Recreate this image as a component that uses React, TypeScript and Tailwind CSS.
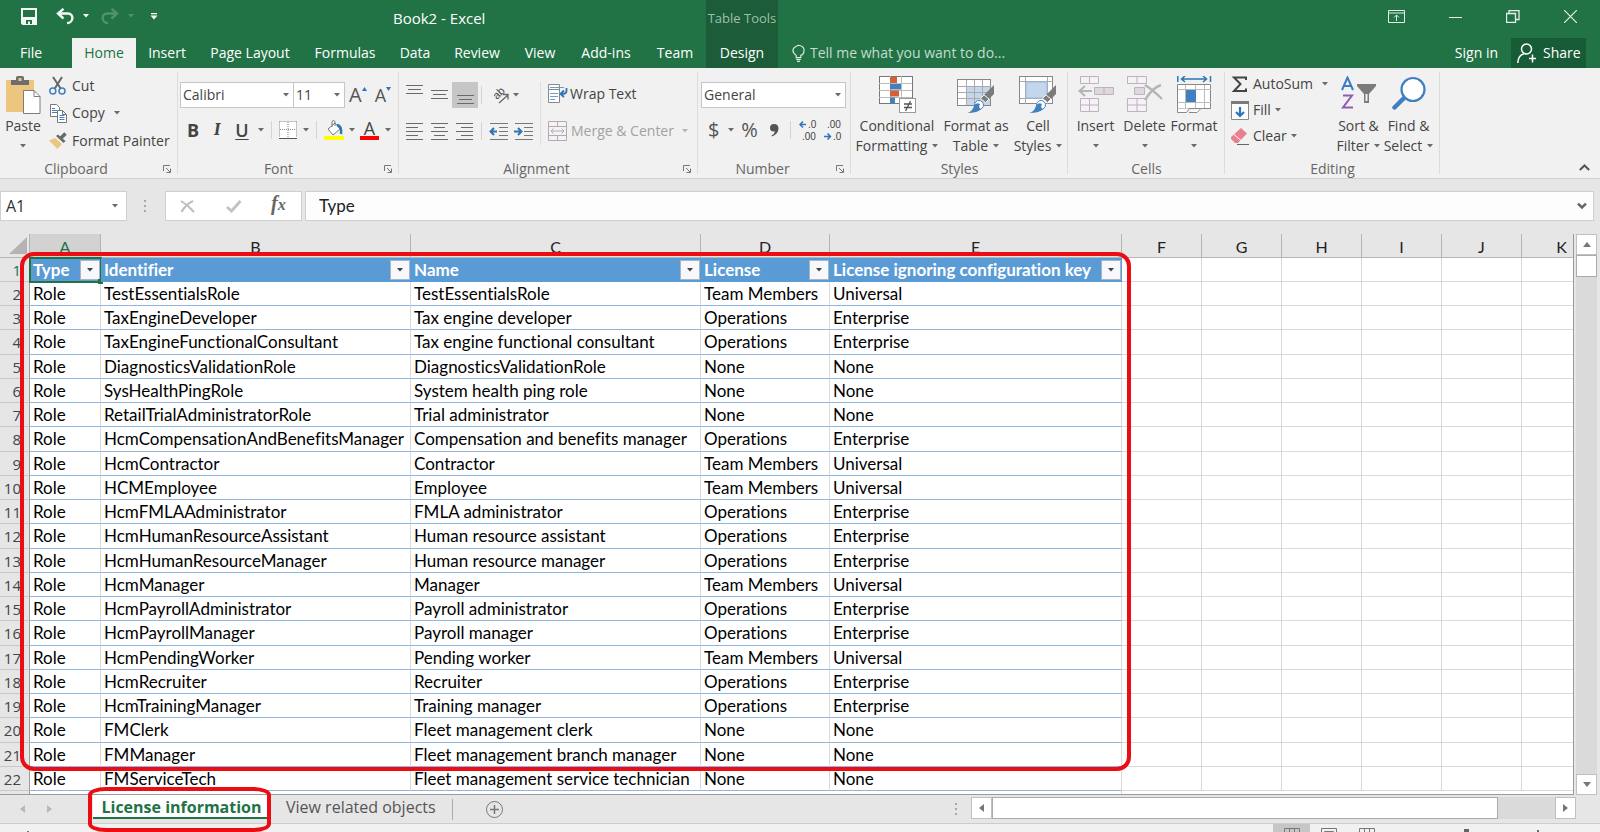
import React, { useState } from 'react';

interface RoleRow {
  id: string;
  name: string;
  license: string;
  ignoring: string;
}

const rows: RoleRow[] = [
  { id: 'TestEssentialsRole', name: 'TestEssentialsRole', license: 'Team Members', ignoring: 'Universal' },
  { id: 'TaxEngineDeveloper', name: 'Tax engine developer', license: 'Operations', ignoring: 'Enterprise' },
  { id: 'TaxEngineFunctionalConsultant', name: 'Tax engine functional consultant', license: 'Operations', ignoring: 'Enterprise' },
  { id: 'DiagnosticsValidationRole', name: 'DiagnosticsValidationRole', license: 'None', ignoring: 'None' },
  { id: 'SysHealthPingRole', name: 'System health ping role', license: 'None', ignoring: 'None' },
  { id: 'RetailTrialAdministratorRole', name: 'Trial administrator', license: 'None', ignoring: 'None' },
  { id: 'HcmCompensationAndBenefitsManager', name: 'Compensation and benefits manager', license: 'Operations', ignoring: 'Enterprise' },
  { id: 'HcmContractor', name: 'Contractor', license: 'Team Members', ignoring: 'Universal' },
  { id: 'HCMEmployee', name: 'Employee', license: 'Team Members', ignoring: 'Universal' },
  { id: 'HcmFMLAAdministrator', name: 'FMLA administrator', license: 'Operations', ignoring: 'Enterprise' },
  { id: 'HcmHumanResourceAssistant', name: 'Human resource assistant', license: 'Operations', ignoring: 'Enterprise' },
  { id: 'HcmHumanResourceManager', name: 'Human resource manager', license: 'Operations', ignoring: 'Enterprise' },
  { id: 'HcmManager', name: 'Manager', license: 'Team Members', ignoring: 'Universal' },
  { id: 'HcmPayrollAdministrator', name: 'Payroll administrator', license: 'Operations', ignoring: 'Enterprise' },
  { id: 'HcmPayrollManager', name: 'Payroll manager', license: 'Operations', ignoring: 'Enterprise' },
  { id: 'HcmPendingWorker', name: 'Pending worker', license: 'Team Members', ignoring: 'Universal' },
  { id: 'HcmRecruiter', name: 'Recruiter', license: 'Operations', ignoring: 'Enterprise' },
  { id: 'HcmTrainingManager', name: 'Training manager', license: 'Operations', ignoring: 'Enterprise' },
  { id: 'FMClerk', name: 'Fleet management clerk', license: 'None', ignoring: 'None' },
  { id: 'FMManager', name: 'Fleet management branch manager', license: 'None', ignoring: 'None' },
  { id: 'FMServiceTech', name: 'Fleet management service technician', license: 'None', ignoring: 'None' }
];

const headers = ['Type', 'Identifier', 'Name', 'License', 'License ignoring configuration key'];
const letters = ['A', 'B', 'C', 'D', 'E', 'F', 'G', 'H', 'I', 'J', 'K'];
const emptyCols = ['F', 'G', 'H', 'I', 'J', 'K'];

const Arrow = ({ className = 'text-[#6a6a6a]' }: { className?: string }) => (
  <svg width="6" height="4" viewBox="0 0 6 4" className={`shrink-0 ${className}`} aria-hidden="true">
    <path d="M0 0h6L3 3.6z" fill="currentColor" />
  </svg>
);

const Launcher = ({ label }: { label: string }) => (
  <button aria-label={label} className="absolute right-[6px] bottom-[5px]">
    <svg width="9" height="8" viewBox="0 0 9 8" fill="none" stroke="#777">
      <path d="M.5 6V.5H7M3 3l4 4M7.500 3.500v4h-4" />
    </svg>
  </button>
);

interface GroupProps {
  label: string;
  className: string;
  launcher?: boolean;
  children: React.ReactNode;
}

const Group: React.FC<GroupProps> = ({ label, className, launcher, children }) => (
  <section aria-label={label} className={`relative flex shrink-0 flex-col ${className}`}>
    <div className="h-[92px]">{children}</div>
    <div className="text-center leading-[18px] text-[#666]">{label}</div>
    {launcher && <Launcher label={`${label} settings`} />}
    <div className="absolute top-1 right-0 bottom-1 w-px bg-[#dcdcdc]" />
  </section>
);

interface BigButtonProps {
  icon: React.ReactNode;
  top: string;
  bottom?: string;
  className: string;
}

const BigButton: React.FC<BigButtonProps> = ({ icon, top, bottom, className }) => (
  <button className={`flex shrink-0 flex-col items-center pt-2 leading-5 whitespace-nowrap ${className}`}>
    {icon}
    <span className="pt-[2px]">{top}</span>
    <span className="flex h-5 items-center gap-[5px]">
      {bottom}
      <Arrow />
    </span>
  </button>
);

const Separator = ({ className = 'h-[18px]' }: { className?: string }) => (
  <span className={`w-px shrink-0 bg-[#d4d4d4] ${className}`} />
);

const Lines = ({ widths, top = 1, gap = 4, align }: { widths: number[]; top?: number; gap?: number; align: 'left' | 'center' | 'right' }) => (
  <svg width="17" height="19" viewBox="0 0 17 19" aria-hidden="true">
    {widths.map((w, i) => (
      <rect
        key={i}
        x={align === 'left' ? 0 : align === 'right' ? 17 - w : Math.floor((17 - w) / 2)}
        y={top + i * gap}
        width={w}
        height="1"
        fill="#6a6a6a"
      />
    ))}
  </svg>
);

const Indent = ({ outward }: { outward: boolean }) => (
  <svg width="19" height="19" viewBox="0 0 19 19" fill="none" aria-hidden="true">
    <path d="M1 1.500h18M10 5.500h9M10 9.500h9M10 13.500h9M1 17.500h18" stroke="#777" />
    {outward ? (
      <path d="M8 9.500H2M5 6L1.500 9.500 5 13" stroke="#2e75b6" strokeWidth="2" />
    ) : (
      <path d="M0 9.500h6M4 6l3.500 3.500L4 13" stroke="#2e75b6" strokeWidth="2" />
    )}
  </svg>
);

const PasteIcon = () => (
  <svg width="35" height="39" viewBox="0 0 35 39" aria-hidden="true">
    <rect x="0" y="4" width="28" height="32" rx="1" fill="#ecc57e" />
    <path d="M5 4h5V1.500Q10 0 12 0h4q2 0 2 1.500V4h5v5H5z" fill="#6d6d6d" />
    <rect x="12.500" y="2" width="3" height="3" fill="#ecc57e" />
    <path d="M17.500 14.500H28l6 6v17H17.500z" fill="#fff" stroke="#7d7d7d" />
    <path d="M28 14.500v6h6" fill="none" stroke="#7d7d7d" />
  </svg>
);

const CutIcon = () => (
  <svg width="18" height="19" viewBox="0 0 18 19" fill="none" aria-hidden="true">
    <path d="M4 1l8 12M13 1L5.500 13" stroke="#666" strokeWidth="2" />
    <circle cx="3.800" cy="15" r="3" stroke="#3f7fc1" strokeWidth="1.500" />
    <circle cx="13" cy="15" r="3" stroke="#3f7fc1" strokeWidth="1.500" />
  </svg>
);

const CopyIcon = () => (
  <svg width="18" height="19" viewBox="0 0 18 19" fill="#fff" stroke="#777" aria-hidden="true">
    <path d="M1.500.5h6l3 3v9h-9z" />
    <path d="M3 4.500h3M3 6.500h5M3 8.500h5" stroke="#3f7fc1" />
    <path d="M8.500 6.500h5l4 4v8h-9zM13.500 6.500v4h4" />
    <path d="M10.500 11.500h5M10.500 13.500h5M10.500 15.500h5" stroke="#3f7fc1" />
  </svg>
);

const PainterIcon = () => (
  <svg width="19" height="17" viewBox="0 0 19 17" aria-hidden="true">
    <path d="M0 8.500L6 6l7 6-4.500 5z" fill="#ecc57e" />
    <path d="M7 4l2-1.500 7.500 6.500-2 2z" fill="#6a6a6a" />
    <path d="M11.500 6.500L16.500 1.500" stroke="#6a6a6a" strokeWidth="3.500" />
  </svg>
);

const BorderIcon = () => (
  <svg width="18" height="18" viewBox="0 0 18 18" fill="none" aria-hidden="true">
    <rect x="0" y="0" width="18" height="17" fill="#fff" />
    <path d="M.5.5h17M.5.5v16M17.500.5v16M9 1v16M1 8.500h16" stroke="#888" strokeDasharray="1 1" />
    <path d="M0 17.500h18" stroke="#555" />
  </svg>
);

const BucketIcon = () => (
  <svg width="20" height="20" viewBox="0 0 20 20" fill="none" aria-hidden="true">
    <path d="M4 9l7-6 5 6-7 6z" fill="#fff" stroke="#777" />
    <path d="M8 7V2.500Q8 .5 9.500.5T11 2.500V6" stroke="#777" />
    <path d="M13 5q5 1 4 9" stroke="#2e75b6" strokeWidth="2.500" />
    <rect y="16" width="20" height="4" fill="#ff0" />
  </svg>
);

const OrientationIcon = () => (
  <svg width="20" height="22" viewBox="0 0 20 22" className="font-['Liberation_Sans',sans-serif]" aria-hidden="true">
    <text x="7" y="16" transform="rotate(-45 7 16)" fontSize="11" fill="#444">ab</text>
    <path d="M9 19l9-8M13 10.500h5V15.500" fill="none" stroke="#666" strokeWidth="1.300" />
  </svg>
);

const WrapIcon = () => (
  <svg width="20" height="20" viewBox="0 0 20 20" fill="none" aria-hidden="true">
    <path d="M.5.5h11v5H.5zM.5 5.500h11v13H.5z" fill="#fff" stroke="#888" />
    <path d="M2 3.500h14M2 9.500h8M2 12.500h8M2 15.500h5" stroke="#6e9bd1" />
    <path d="M18.500 4v3q0 3-5 3M16 6.500L12.500 10l3.500 3" stroke="#2e75b6" strokeWidth="1.800" />
  </svg>
);

const MergeIcon = () => (
  <svg width="19" height="20" viewBox="0 0 19 20" fill="#f5f1f5" stroke="#b0abb0" aria-hidden="true">
    <path d="M.5.5h18v19H.5zM.5 5.500h18M.5 14.500h18M9.500.5v5M9.500 14.500v5M3 10h13M5.500 7.500L3 10l2.500 2.500M13.500 7.500L16 10l-2.500 2.500" />
  </svg>
);

const Brush = () => (
  <>
    <path d="M37 9v9l-5 5-5-4z" fill="#7b7b7b" />
    <path d="M27 19l5 4-3.500 3.500-5-4z" fill="#7b7b7b" stroke="#f1f1f1" />
    <circle cx="22" cy="29" r="4.500" fill="#fff" stroke="#4a86c5" />
    <path d="M10 37q5-1 7-7 2-4 6-2-2 4 1 5-3 4-14 4z" fill="#4080bf" />
  </>
);

const ConditionalIcon = () => (
  <svg width="37" height="38" viewBox="0 0 37 38" aria-hidden="true">
    <rect x=".5" y=".5" width="33" height="27" fill="#fff" stroke="#777" />
    <path d="M11.500 0v27M22.500 0v27M0 7.500h33M0 14.500h33M0 21.500h33" stroke="#bbb" />
    <path d="M11 1h7v6h-7zM11 14.500h9v6h-9z" fill="#d55e3b" />
    <path d="M11 8h11v5.500H11zM11 21.500h5v5.500h-5z" fill="#4080bf" />
    <rect x="20.500" y="22.500" width="16" height="14" fill="#fff" stroke="#999" />
    <path d="M25 28h8M25 31.500h8M31.500 25l-5 10" stroke="#555" strokeWidth="1.300" />
  </svg>
);

const TableIcon = () => (
  <svg width="38" height="38" viewBox="0 0 38 38" aria-hidden="true">
    <rect x=".5" y="3.500" width="33" height="26" fill="#fff" stroke="#888" />
    <path d="M9 10h24v19H9z" fill="#c3d6ec" />
    <path d="M9.500 4v25M17.500 4v25M25.500 4v25M1 10.500h33M1 16.500h33M1 22.500h33" stroke="#aaa" />
    <Brush />
  </svg>
);

const CellStylesIcon = () => (
  <svg width="38" height="38" viewBox="0 0 38 38" aria-hidden="true">
    <rect x=".5" y=".5" width="33" height="27" fill="#fff" stroke="#888" />
    <path d="M6.500 1v27M28.500 1v27M1 5.500h33M1 22.500h33" stroke="#aaa" />
    <path d="M7 6h21v16H7z" fill="#c3d6ec" stroke="#9fb8d6" />
    <Brush />
  </svg>
);

const InsertIcon = () => (
  <svg width="36" height="38" viewBox="0 0 36 38" fill="#f7f0f7" stroke="#bbb4bb" aria-hidden="true">
    <path d="M2.500.5h18v7h-18zM11.500.5v7M2.500 22.500h18v13h-18zM11.500 22.500v13M2.500 29h18" />
    <path d="M16.500 11.500h19v7h-19zM26 11.500v7" fill="#ded8de" />
    <path d="M14 15H2M7 10l-5.500 5L7 20" fill="none" stroke="#b5b5b5" strokeWidth="2.200" />
  </svg>
);

const DeleteIcon = () => (
  <svg width="36" height="38" viewBox="0 0 36 38" fill="#f7f0f7" stroke="#bbb4bb" aria-hidden="true">
    <path d="M.5.5h19v7H.5zM10 .5v7M.5 22.500h19v13H.5zM10 22.500v13M.5 29h19" />
    <path d="M7.500 11.500h10v7h-10z" fill="#ded8de" />
    <path d="M18 9q8 5 17 14M34 9q-9 3-16 15" fill="none" stroke="#b5b5b5" strokeWidth="2.400" />
  </svg>
);

const FormatIcon = () => (
  <svg width="35" height="38" viewBox="0 0 35 38" aria-hidden="true">
    <path d="M.8 0v6M33.500 0v6M4 3h26M8 0L4.500 3 8 6M26 0l3.500 3L26 6" fill="none" stroke="#2e75b6" strokeWidth="1.500" />
    <path d="M.5 8.500h33v24h-33z" fill="#fff" stroke="#888" />
    <path d="M8.500 9v23M18.500 9v23M27.500 9v23M1 13.500h33M1 26.500h33" stroke="#bbb" />
    <path d="M9 14h10v12H9z" fill="#4080bf" />
    <path d="M.5 32.500v4h9l3-4M12 36.500h8l4-4" fill="#fff" stroke="#888" />
  </svg>
);

const SortIcon = () => (
  <svg width="36" height="38" viewBox="0 0 36 38" fill="none" aria-hidden="true">
    <path d="M1 14L6.500 1.500 12 14M3 10h7" stroke="#3b7cc0" strokeWidth="2" />
    <path d="M2 19.500h9L2 31.500h10" stroke="#8f5cb5" strokeWidth="2" />
    <path d="M16 8h19v2l-7 8v9h-5v-9l-7-8z" fill="#7b7b7b" />
    <path d="M25.500 18v7" stroke="#f1f1f1" strokeWidth="2" />
  </svg>
);

const FindIcon = () => (
  <svg width="34" height="38" viewBox="0 0 34 38" fill="none" aria-hidden="true">
    <path d="M12 22L2.500 31.500" stroke="#3f7fc1" strokeWidth="4.500" strokeLinecap="round" />
    <circle cx="21" cy="13.500" r="11.500" fill="#fff" stroke="#3f7fc1" strokeWidth="2.200" />
  </svg>
);

const TitleBar = () => (
  <header className="flex h-[38px] items-stretch bg-[#217346] whitespace-nowrap text-white">
    <div className="flex w-[38%] max-w-[393px] items-center pl-5">
      <button aria-label="Save" className="mb-[6px] ml-px">
        <svg width="16" height="17" viewBox="0 0 16 17" aria-hidden="true">
          <path d="M0 0h16v17H1.500L0 15.500zM2 2v7h12V2zM5 12v4h2v-2.500h2V16h2v-4z" fill="#f4f8f5" fillRule="evenodd" />
        </svg>
      </button>
      <button aria-label="Undo" className="mb-[6px] ml-[19px]">
        <svg width="18" height="17" viewBox="0 0 18 17" fill="none" stroke="#f4f8f5" strokeWidth="2.400" aria-hidden="true">
          <path d="M7.500.8L2 5.500l5.500 5M2.500 5.500H12c6 0 6 9.500-1 9.500" />
        </svg>
      </button>
      <Arrow className="mb-[6px] ml-[9px] text-white" />
      <button aria-label="Redo" className="mb-[6px] ml-3">
        <svg width="18" height="17" viewBox="0 0 18 17" fill="none" stroke="#4f9270" strokeWidth="2.400" aria-hidden="true">
          <path d="M10.500.8L16 5.500l-5.500 5M15.500 5.500H6c-6 0-6 9.500 1 9.500" />
        </svg>
      </button>
      <Arrow className="mb-[6px] ml-[9px] text-[#4f9270]" />
      <button aria-label="Customize Quick Access Toolbar" className="mb-[6px] ml-4">
        <svg width="8" height="7" viewBox="0 0 8 7" fill="#fff" aria-hidden="true">
          <path d="M1 0h6v1.300H1zM.5 2.500h7L4 6.500z" />
        </svg>
      </button>
    </div>
    <div className="flex w-[313px] items-center pb-[2px] text-[15px]">Book2 - Excel</div>
    <div className="flex w-[72px] items-center justify-center bg-[#1c5c38] text-[13px] text-[#9cc0aa]">Table Tools</div>
    <div className="mb-[6px] ml-auto flex items-center gap-11 pr-[23px]">
      <button aria-label="Ribbon Display Options">
        <svg width="17" height="13" viewBox="0 0 17 13" fill="none" stroke="#e6f0ea" aria-hidden="true">
          <path d="M.5.5h16v12H.5zM.5 3h16M8.500 11V5M6 7.500L8.500 5 11 7.500" />
        </svg>
      </button>
      <button aria-label="Minimize">
        <svg width="13" height="13" viewBox="0 0 13 13" stroke="#e6f0ea" aria-hidden="true">
          <path d="M0 7.500h13" />
        </svg>
      </button>
      <button aria-label="Restore">
        <svg width="14" height="13" viewBox="0 0 14 13" fill="none" stroke="#e6f0ea" aria-hidden="true">
          <path d="M.5 3.500h9v9h-9zM3 3V.5h10v9h-3" strokeWidth="1.300" />
        </svg>
      </button>
      <button aria-label="Close">
        <svg width="13" height="13" viewBox="0 0 13 13" stroke="#e6f0ea" strokeWidth="1.200" aria-hidden="true">
          <path d="M0 0l13 13M13 0L0 13" />
        </svg>
      </button>
    </div>
  </header>
);

const tabs = [
  { id: 'file', label: 'File', width: 'w-[62px] mr-[10px]' },
  { id: 'home', label: 'Home', width: 'w-16' },
  { id: 'insert', label: 'Insert', width: 'w-[62px]' },
  { id: 'layout', label: 'Page Layout', width: 'w-[104px]' },
  { id: 'formulas', label: 'Formulas', width: 'w-[86px]' },
  { id: 'data', label: 'Data', width: 'w-[54px]' },
  { id: 'review', label: 'Review', width: 'w-[70px]' },
  { id: 'view', label: 'View', width: 'w-[56px]' },
  { id: 'addins', label: 'Add-ins', width: 'w-[76px]' },
  { id: 'team', label: 'Team', width: 'w-[62px]' }
];

const TabStrip = () => {
  const [activeTab, setActiveTab] = useState('home');

  return (
    <nav className="flex h-[30px] items-stretch bg-[#217346] text-sm whitespace-nowrap text-white">
      {tabs.map((tab) => (
        <button
          key={tab.id}
          onClick={() => setActiveTab(tab.id)}
          className={`shrink-0 ${tab.width} ${activeTab === tab.id ? 'bg-[#f1f1f1] text-[#217346]' : ''}`}
        >
          {tab.label}
        </button>
      ))}
      <button className="w-[72px] shrink-0 bg-[#1c5c38]">Design</button>
      <label className="flex w-[260px] items-center gap-[5px] pl-[14px]">
        <svg width="14" height="19" viewBox="0 0 14 19" fill="none" stroke="#e6f0ea" strokeWidth="1.200" aria-hidden="true">
          <path d="M4.500 14v-2.500Q1 9 1 6t6-5.400Q13 1.500 13 6t-3.500 5.500V14zM4.500 16h5M5.500 18h3" />
        </svg>
        <input
          aria-label="Tell me what you want to do"
          placeholder="Tell me what you want to do..."
          className="w-full bg-transparent placeholder:text-[#c4dccf] outline-none"
        />
      </label>
      <button className="ml-auto px-[13px]">Sign in</button>
      <button className="mr-[14px] flex w-[75px] items-center gap-[7px] bg-[#185c37] pl-[6px]">
        <svg width="19" height="20" viewBox="0 0 19 20" fill="none" stroke="#fff" strokeWidth="1.500" aria-hidden="true">
          <circle cx="9.500" cy="6" r="5" />
          <path d="M.8 20q.5-8 6-9M12 15.500h7M15.500 11.500v8" />
        </svg>
        Share
      </button>
    </nav>
  );
};

const ClipboardGroup = () => (
  <Group label="Clipboard" className="w-[178px] pr-[26px]" launcher>
    <div className="flex">
      <button className="flex w-[46px] shrink-0 flex-col items-center pt-2 leading-5">
        <PasteIcon />
        <span className="pt-px">Paste</span>
        <span className="flex h-5 items-center"><Arrow /></span>
      </button>
      <div className="flex shrink-0 flex-col pt-1 pl-[3px] whitespace-nowrap">
        <button className="flex h-[27px] items-center gap-[5px]"><CutIcon />Cut</button>
        <button className="flex h-7 items-center gap-[5px]"><CopyIcon />Copy<Arrow className="ml-1 text-[#6a6a6a]" /></button>
        <button className="flex h-[27px] items-center gap-1"><PainterIcon />Format Painter</button>
      </div>
    </div>
  </Group>
);

interface PickerProps {
  label: string;
  value: string;
  className: string;
}

const Picker: React.FC<PickerProps> = ({ label, value, className }) => (
  <span className={`relative flex h-[26px] items-center border border-[#c6c6c6] bg-white ${className}`}>
    <select aria-label={label} className="h-full w-full appearance-none pl-[2px] text-[#444] outline-none">
      <option>{value}</option>
    </select>
    <span className="pointer-events-none absolute right-1"><Arrow /></span>
  </span>
);

const FontGroup = () => (
  <Group label="Font" className="w-[221px] pr-[20px]" launcher>
    <div className="flex w-[218px] items-center pt-[14px] pl-[2px]">
      <Picker label="Font name" value="Calibri" className="w-[114px]" />
      <Picker label="Font size" value="11" className="-ml-px w-[52px]" />
      <button aria-label="Increase font size" className="flex items-start pl-1 text-xl leading-6 text-[#555]">
        A
        <svg width="5" height="4" viewBox="0 0 5 4" className="mt-1" aria-hidden="true"><path d="M0 4h5L2.500 0z" fill="#2e75b6" /></svg>
      </button>
      <button aria-label="Decrease font size" className="flex items-start pl-2 text-lg leading-6 text-[#555]">
        A
        <svg width="5" height="4" viewBox="0 0 5 4" className="mt-1" aria-hidden="true"><path d="M0 0h5L2.500 4z" fill="#2e75b6" /></svg>
      </button>
    </div>
    <div className="flex w-[218px] items-center pt-[10px] pl-[9px] text-lg leading-6 text-[#444]">
      <button className="w-3 font-bold">B</button>
      <button className="ml-3 w-3 font-serif font-bold italic">I</button>
      <button className="ml-3 w-[14px] font-semibold underline underline-offset-2">U</button>
      <span className="ml-[9px]"><Arrow /></span>
      <Separator className="ml-[7px] h-[18px]" />
      <button aria-label="Borders" className="ml-[7px]"><BorderIcon /></button>
      <span className="ml-[6px]"><Arrow /></span>
      <Separator className="ml-[7px] h-[18px]" />
      <button aria-label="Fill color" className="ml-[7px]"><BucketIcon /></button>
      <span className="ml-[5px]"><Arrow /></span>
      <button aria-label="Font color" className="ml-[5px] flex h-5 w-[19px] justify-center border-b-4 border-[#f00] leading-4">A</button>
      <span className="ml-[6px]"><Arrow /></span>
    </div>
  </Group>
);

const AlignmentGroup = () => (
  <Group label="Alignment" className="w-[299px] pr-[24px]" launcher>
    <div className="flex w-[297px] items-center pt-[13px]">
      <div className="flex w-[142px] flex-col gap-[14px] border-r border-[#dedede] pb-1">
        <div className="flex h-[26px] items-center">
          <button aria-label="Top align" className="ml-[3px] flex h-[26px] w-[25px] justify-center"><Lines widths={[17, 13, 17]} top={3} align="center" /></button>
          <button aria-label="Middle align" className="flex h-[26px] w-[25px] justify-center"><Lines widths={[17, 13, 17]} top={8} align="center" /></button>
          <button aria-label="Bottom align" className="flex h-[26px] w-[26px] items-end justify-center bg-[#c6c6c6]"><Lines widths={[17, 13, 17]} top={6} align="center" /></button>
          <Separator className="ml-[3px] h-[18px]" />
          <button aria-label="Orientation" className="ml-2 flex items-center gap-[3px]"><OrientationIcon /><Arrow /></button>
        </div>
        <div className="flex items-center">
          <button aria-label="Align left" className="ml-[7px]"><Lines widths={[17, 12, 17, 12, 17]} align="left" /></button>
          <button aria-label="Center" className="ml-2"><Lines widths={[17, 11, 17, 11, 17]} align="center" /></button>
          <button aria-label="Align right" className="ml-2"><Lines widths={[17, 12, 17, 12, 17]} align="right" /></button>
          <Separator className="ml-[8px] h-[18px]" />
          <button aria-label="Decrease indent" className="ml-[7px]"><Indent outward /></button>
          <button aria-label="Increase indent" className="ml-[6px]"><Indent outward={false} /></button>
        </div>
      </div>
      <div className="flex flex-col gap-[14px] pb-1 pl-[7px] whitespace-nowrap">
        <button className="flex h-[26px] items-center gap-[2px]"><WrapIcon />Wrap Text</button>
        <button className="flex h-5 items-center gap-[4px] text-[#a2a2a2]"><MergeIcon />Merge &amp; Center<Arrow className="ml-1 text-[#b5b5b5]" /></button>
      </div>
    </div>
  </Group>
);

const Decimals = ({ increase }: { increase: boolean }) => (
  <svg width="19" height="24" viewBox="0 0 19 24" fontSize="10" fill="#444" className="font-['Liberation_Sans',sans-serif]" aria-hidden="true">
    <text x={increase ? 9 : 3} y="10">{increase ? '.0' : '.00'}</text>
    <text x={increase ? 3 : 9} y="22">{increase ? '.00' : '.0'}</text>
    {increase ? (
      <path d="M7 6.500H1M4 3.500l-3 3 3 3" fill="none" stroke="#2e75b6" strokeWidth="1.500" />
    ) : (
      <path d="M0 18.500h6M3.500 15.500l3 3-3 3" fill="none" stroke="#2e75b6" strokeWidth="1.500" />
    )}
  </svg>
);

const NumberGroup = () => (
  <Group label="Number" className="w-[153px] pr-[24px]" launcher>
    <div className="w-[153px] pt-[14px] pr-[5px] pl-[3px]">
      <Picker label="Number format" value="General" className="w-full" />
      <div className="flex items-center pt-[10px] pl-[7px] text-xl leading-6 text-[#555]">
        <button>$</button>
        <span className="ml-[9px]"><Arrow /></span>
        <button className="ml-[6px] w-[18px]">%</button>
        <button aria-label="Comma style" className="ml-[12px]">
          <svg width="9" height="13" viewBox="0 0 9 13" aria-hidden="true">
            <path d="M4 0Q8.500 0 8.500 4.500 8.500 10 2 12.500L1.500 11.500Q4.500 10 5 7.500 0 8 0 4 0 0 4 0z" fill="#555" />
          </svg>
        </button>
        <Separator className="ml-[11px] h-[18px]" />
        <button aria-label="Increase decimal" className="ml-2"><Decimals increase /></button>
        <button aria-label="Decrease decimal" className="ml-[6px]"><Decimals increase={false} /></button>
      </div>
    </div>
  </Group>
);

const EditingGroup = () => (
  <Group label="Editing" className="w-[215px]">
    <div className="flex pl-[6px]">
      <div className="flex w-[103px] shrink-0 flex-col pt-[3px]">
        <button className="flex h-[26px] items-center gap-[5px]">
          <svg width="17" height="17" viewBox="0 0 17 17" fill="none" stroke="#444" strokeWidth="2" aria-hidden="true">
            <path d="M15 4V1.500H3L9.500 8 3 15h12v-2.500" />
          </svg>
          AutoSum
          <Arrow className="ml-1 text-[#6a6a6a]" />
        </button>
        <button className="flex h-[26px] items-center gap-1">
          <svg width="18" height="19" viewBox="0 0 18 19" fill="#fff" aria-hidden="true">
            <path d="M.5.5h17v18H.5z" stroke="#8a8a8a" />
            <path d="M0 0h18v3H0z" fill="#7a7a7a" />
            <path d="M9 6v9M5 11l4 4 4-4" fill="none" stroke="#2e75b6" strokeWidth="2.200" />
          </svg>
          Fill
          <Arrow />
        </button>
        <button className="flex h-[26px] items-center gap-1">
          <svg width="18" height="17" viewBox="0 0 18 17" aria-hidden="true">
            <path d="M0 9L10 0l6 5.500L7 15H4L0 11z" fill="#e88090" />
            <path d="M3 6.500l7 6" stroke="#fff" />
            <path d="M6 16.500h12" stroke="#666" />
          </svg>
          Clear
          <Arrow />
        </button>
      </div>
      <BigButton icon={<SortIcon />} top="Sort &amp;" bottom="Filter" className="w-[49px]" />
      <BigButton icon={<FindIcon />} top="Find &amp;" bottom="Select" className="w-[51px]" />
    </div>
  </Group>
);

const Ribbon = () => (
  <div className="relative flex h-[111px] shrink-0 border-b border-[#d0d0d0] bg-[#f1f1f1] text-sm text-[#444]">
    <ClipboardGroup />
    <FontGroup />
    <AlignmentGroup />
    <NumberGroup />
    <Group label="Styles" className="w-[217px]">
      <div className="flex pl-1">
        <BigButton icon={<ConditionalIcon />} top="Conditional" bottom="Formatting" className="w-[84px]" />
        <BigButton icon={<TableIcon />} top="Format as" bottom="Table" className="w-[74px]" />
        <BigButton icon={<CellStylesIcon />} top="Cell" bottom="Styles" className="w-[50px]" />
      </div>
    </Group>
    <Group label="Cells" className="w-[157px]">
      <div className="flex pl-[3px]">
        <BigButton icon={<InsertIcon />} top="Insert" className="w-[49px]" />
        <BigButton icon={<DeleteIcon />} top="Delete" className="w-[49px]" />
        <BigButton icon={<FormatIcon />} top="Format" className="w-[50px]" />
      </div>
    </Group>
    <EditingGroup />
    <button aria-label="Collapse the Ribbon" className="mt-auto mr-[10px] mb-[7px] ml-auto">
      <svg width="11" height="7" viewBox="0 0 11 7" fill="none" stroke="#555" strokeWidth="2" aria-hidden="true">
        <path d="M.8 6l4.700-4.500L10.200 6" />
      </svg>
    </button>
  </div>
);

const FormulaBar = () => (
  <div className="flex items-center pt-3 pr-[6px] pb-[13px] text-base">
    <div className="flex h-[30px] w-[127px] items-center border border-[#cfcfcf] bg-white pr-2">
      <input aria-label="Name box" defaultValue="A1" className="w-full pl-[5px] text-[#333] outline-none" />
      <Arrow />
    </div>
    <span className="mx-[17px] flex flex-col gap-[3px]">
      <i className="size-[2px] bg-[#a6a6a6]" />
      <i className="size-[2px] bg-[#a6a6a6]" />
      <i className="size-[2px] bg-[#a6a6a6]" />
    </span>
    <div className="ml-[2px] flex h-[30px] w-[137px] items-center border border-[#cfcfcf] bg-white pl-[14px]">
      <button aria-label="Cancel">
        <svg width="15" height="13" viewBox="0 0 15 13" stroke="#bdbdbd" strokeWidth="2" fill="none" aria-hidden="true">
          <path d="M1 1q7 4 13 11M13 1Q6 4 1.500 12" />
        </svg>
      </button>
      <button aria-label="Enter" className="ml-[31px]">
        <svg width="16" height="13" viewBox="0 0 16 13" stroke="#c3c3c3" strokeWidth="3" fill="none" aria-hidden="true">
          <path d="M1 7l4.500 4L14.500 1" />
        </svg>
      </button>
      <button aria-label="Insert function" className="ml-[29px] pb-1 font-['Liberation_Serif',serif] text-xl leading-6 font-bold text-[#666] italic">
        f<span className="text-base">x</span>
      </button>
    </div>
    <div className="ml-[3px] flex h-[30px] flex-1 items-center border border-[#cfcfcf] bg-[#fdfdfd] pr-[6px]">
      <input aria-label="Formula bar" defaultValue="Type" className="w-full pl-[13px] font-['Lato','Liberation_Sans',sans-serif] text-[17px] text-[#222] outline-none" />
      <svg width="10" height="8" viewBox="0 0 10 8" fill="none" stroke="#666" strokeWidth="2.500" aria-hidden="true">
        <path d="M1 1.500L5 5.500l4-4" />
      </svg>
    </div>
  </div>
);

const FilterButton = ({ label }: { label: string }) => (
  <button aria-label={`Filter ${label}`} className="flex h-5 w-5 shrink-0 items-center justify-center border border-[#a9b4c4] bg-[#f6f8fb]">
    <Arrow className="text-[#444]" />
  </button>
);

const numberCell = "border-r border-b border-r-[#9b9b9b] border-b-[#c8c8c8] bg-[#e6e6e6] p-0 pr-2 text-right font-['Open_Sans','Noto_Sans',sans-serif] text-[15px]/[22px] font-normal";
const dataCell = 'overflow-hidden border-r border-b border-r-[#d9d9d9] border-b-[#8fb5e0] p-0 pl-[3px]';
const emptyCell = 'border-r border-b border-[#d9d9d9] p-0';

const Sheet = () => (
  <div className="relative flex min-h-0 flex-1">
    <div className="min-w-0 flex-1 overflow-hidden border-r border-b border-[#9b9b9b] bg-white">
      <table className="w-[1602px] table-fixed border-separate border-spacing-0 font-['Lato','Liberation_Sans',sans-serif] text-[17px] leading-[22px] whitespace-nowrap text-black [font-variant-ligatures:none]">
        <colgroup>
          <col className="w-[30px]" />
          <col className="w-[71px]" />
          <col className="w-[310px]" />
          <col className="w-[290px]" />
          <col className="w-[129px]" />
          <col className="w-[292px]" />
          {emptyCols.map((c) => <col key={c} className="w-20" />)}
        </colgroup>
        <thead>
          <tr className="h-6 text-base/5">
            <td className="border-r border-b border-[#b5b5b5] bg-[#e6e6e6] p-0">
              <svg width="18" height="17" viewBox="0 0 18 17" className="ml-auto mr-[2px]" aria-hidden="true">
                <path d="M18 0v17H0z" fill="#b4b4b4" />
              </svg>
            </td>
            {letters.map((letter) => (
              <th
                key={letter}
                className={`border-r border-b border-[#b5b5b5] p-0 pt-[3px] font-normal ${letter === 'A' ? 'bg-[#d2d2d2] text-[#217346]' : 'bg-[#e6e6e6] text-[#222]'}`}
              >
                {letter}
              </th>
            ))}
          </tr>
        </thead>
        <tbody>
          <tr className="h-6">
            <th className={`${numberCell} text-[#217346]`}>1</th>
            {headers.map((header) => (
              <th key={header} className={`relative bg-[#5b9bd5] p-0 text-white ${header === 'Type' ? 'outline-2 -outline-offset-1 outline-[#217346]' : ''}`}>
                <div className="flex items-center justify-between pr-px pl-[3px]">
                  {header}
                  <FilterButton label={header} />
                </div>
                {header === 'Type' && <span className="absolute -right-[2px] -bottom-[2px] size-[5px] bg-[#217346]" />}
              </th>
            ))}
            {emptyCols.map((c) => <td key={c} className={emptyCell} />)}
          </tr>
          {rows.map((row, i) => (
            <tr key={row.id} className="h-6 nth-[4n]:h-[25px]">
              <th className={`${numberCell} text-[#444]`}>{i + 2}</th>
              <td className={dataCell}>Role</td>
              <td className={dataCell}>{row.id}</td>
              <td className={dataCell}>{row.name}</td>
              <td className={dataCell}>{row.license}</td>
              <td className={`${dataCell} border-r-[#8fb5e0]`}>{row.ignoring}</td>
              {emptyCols.map((c) => <td key={c} className={emptyCell} />)}
            </tr>
          ))}
          <tr className="h-6">
            <th className={numberCell} />
            <td className={dataCell} colSpan={5} />
            <td className={emptyCell} colSpan={6} />
          </tr>
        </tbody>
      </table>
    </div>
    {/* Vertical scrollbar */}
    <div className="mr-[3px] ml-[2px] flex w-[21px] flex-col bg-[#dadada]">
      <button aria-label="Scroll up" className="flex h-[21px] items-center justify-center border border-[#c0c0c0] bg-white">
        <svg width="8" height="5" viewBox="0 0 8 5"><path d="M0 5h8L4 0z" fill="#777" /></svg>
      </button>
      <div className="h-[22px] border border-[#ababab] bg-white" />
      <button aria-label="Scroll down" className="mt-auto flex h-[21px] items-center justify-center border border-[#c0c0c0] bg-white">
        <svg width="8" height="5" viewBox="0 0 8 5"><path d="M0 0h8L4 5z" fill="#777" /></svg>
      </button>
    </div>
    {/* Callout around the exported table */}
    <div className="pointer-events-none absolute top-[18px] left-[20px] h-[519px] w-[1111px] rounded-[14px] border-4 border-[#ec0c14]" />
  </div>
);

const SheetTabs = () => (
  <div className="flex h-[28px] items-stretch text-base">
    <div className="flex w-[93px] items-center gap-[22px] pl-5 text-[#b8b8b8]">
      <button aria-label="Previous sheet">
        <svg width="5" height="8" viewBox="0 0 5 8"><path d="M5 0v8L0 4z" fill="currentColor" /></svg>
      </button>
      <button aria-label="Next sheet">
        <svg width="5" height="8" viewBox="0 0 5 8"><path d="M0 0v8l5-4z" fill="currentColor" /></svg>
      </button>
    </div>
    <div className="relative flex w-[175px]">
      <button className="mb-1 w-full border-b-2 border-[#217346] bg-white pl-[2px] font-bold whitespace-nowrap text-[#217346]">License information</button>
      <div className="pointer-events-none absolute -top-[8px] -left-[5px] h-[45px] w-[183px] rounded-[18px/8px] border-4 border-[#ec0c14]" />
    </div>
    <button className="mb-1 ml-[18px] whitespace-nowrap text-[#555]">View related objects</button>
    <span className="ml-4 h-[21px] w-px self-center bg-[#ababab]" />
    <button aria-label="New sheet" className="ml-[33px]">
      <svg width="17" height="17" viewBox="0 0 17 17" fill="none" stroke="#777" aria-hidden="true">
        <circle cx="8.500" cy="8.500" r="8" />
        <path d="M8.500 4v9M4 8.500h9" strokeWidth="1.500" />
      </svg>
    </button>
    <span className="mr-[14px] ml-auto flex flex-col justify-center gap-[3px]">
      <i className="size-[2px] bg-[#a6a6a6]" />
      <i className="size-[2px] bg-[#a6a6a6]" />
      <i className="size-[2px] bg-[#a6a6a6]" />
    </span>
    <div className="mt-[2px] mr-6 flex h-[22px] w-[605px] bg-[#dadada]">
      <button aria-label="Scroll left" className="flex w-[21px] items-center justify-center border border-[#c0c0c0] bg-white">
        <svg width="5" height="8" viewBox="0 0 5 8"><path d="M5 0v8L0 4z" fill="#777" /></svg>
      </button>
      <div className="w-[506px] border border-[#ababab] bg-white" />
      <button aria-label="Scroll right" className="ml-auto flex w-[21px] items-center justify-center border border-[#c0c0c0] bg-white">
        <svg width="5" height="8" viewBox="0 0 5 8"><path d="M0 0v8l5-4z" fill="#777" /></svg>
      </button>
    </div>
  </div>
);

const StatusBar = () => (
  <footer className="flex h-[9px] items-start overflow-hidden border-t border-[#cdcdcd] bg-[#f1f1f1]">
    <span className="mt-[7px] ml-[27px] h-[2px] w-[2px] bg-[#777]" />
    <button aria-label="Normal view" className="ml-auto flex h-[22px] w-[37px] justify-center bg-[#c6c6c6] pt-1">
      <svg width="16" height="14" viewBox="0 0 16 14" fill="none" stroke="#777"><path d="M.5.5h15v13H.5zM5.500.5v13M10.500.5v13M.5 4.500h15" /></svg>
    </button>
    <button aria-label="Page layout view" className="flex h-[22px] w-[38px] justify-center pt-1">
      <svg width="16" height="14" viewBox="0 0 16 14" fill="none" stroke="#777"><path d="M.5.5h15v13H.5zM3.500 3.500h9v8h-9z" /></svg>
    </button>
    <button aria-label="Page break preview" className="flex h-[22px] w-[37px] justify-center pt-1">
      <svg width="16" height="14" viewBox="0 0 16 14" fill="none" stroke="#777"><path d="M.5.5h15v13H.5zM5.500.5v6M10.500.5v6M.5 6.500h15" /></svg>
    </button>
    <span className="mt-[5px] ml-[79px] h-[10px] w-[5px] bg-[#666]" />
    <span className="mt-[6px] mr-[61px] ml-[68px] h-[10px] w-[2px] bg-[#666]" />
  </footer>
);

const App: React.FC = () => (
  <div className="flex h-screen flex-col overflow-hidden bg-[#e6e6e6] font-['Open_Sans','Noto_Sans',sans-serif]">
    <TitleBar />
    <TabStrip />
    <Ribbon />
    <FormulaBar />
    <Sheet />
    <SheetTabs />
    <StatusBar />
  </div>
);

export default App;
